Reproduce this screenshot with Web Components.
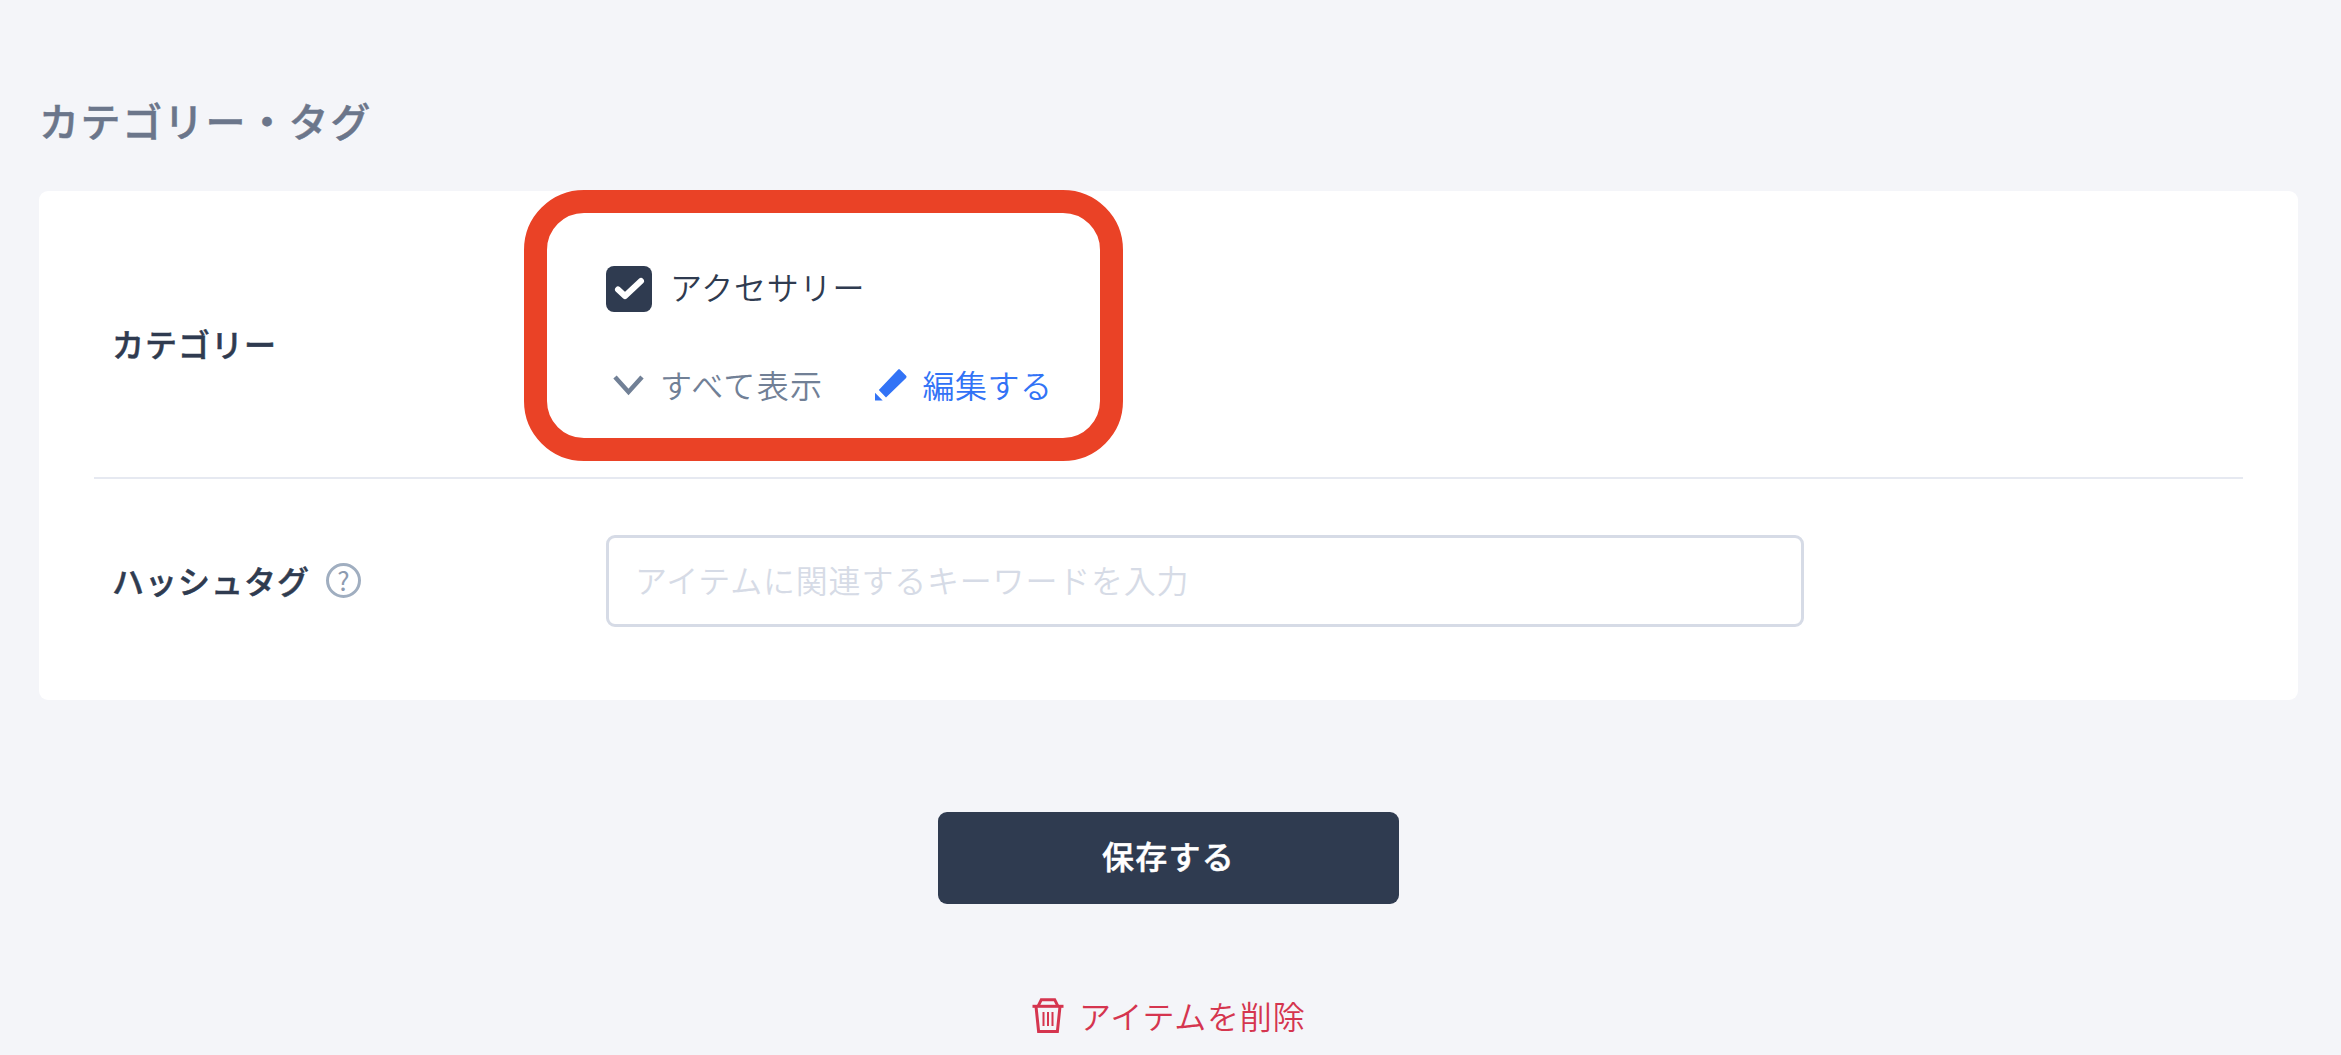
<!DOCTYPE html>
<html lang="ja">
<head>
<meta charset="utf-8">
<title>カテゴリー・タグ</title>
<style>
  html, body { margin: 0; background: #f4f5f9; }
  body { font-family: "Noto Sans CJK JP", "Noto Sans", sans-serif; overflow: hidden; }
</style>
</head>
<body>
<edit-page>
  <tag-card heading="カテゴリー・タグ">
    <form-row label="カテゴリー">
      <category-picker></category-picker>
    </form-row>
    <form-row label="ハッシュタグ" help last>
      <tag-input placeholder="アイテムに関連するキーワードを入力"></tag-input>
    </form-row>
  </tag-card>
  <page-actions></page-actions>
</edit-page>

<script>
class EditPage extends HTMLElement {
    constructor() {
        super();
        this.attachShadow({ mode: 'open' });
        this.shadowRoot.innerHTML = `
            <style>
                :host {
                    display: flex;
                    flex-direction: column;
                    padding: 92px 43px 0 39px;
                    height: 1055px;
                    box-sizing: border-box;
                }
            </style>
            <slot></slot>
        `;
    }
}

class TagCard extends HTMLElement {
    constructor() {
        super();
        this.attachShadow({ mode: 'open' });
        this.shadowRoot.innerHTML = `
            <style>
                :host { display: block; }
                h2 {
                    margin: 0 0 42px;
                    font-size: 40px;
                    line-height: 57px;
                    font-weight: 500;
                    -webkit-text-stroke: .5px #6b768b;
                    color: #6b768b;
                    letter-spacing: 1.6px;
                }
                .card {
                    background: #fff;
                    border-radius: 9px;
                    padding: 19px 55px 18.5px;
                }
            </style>
            <h2></h2>
            <div class="card"><slot></slot></div>
        `;
        this.shadowRoot.querySelector('h2').textContent = this.getAttribute('heading');
    }
}

class FormRow extends HTMLElement {
    constructor() {
        super();
        this.attachShadow({ mode: 'open' });
        this.shadowRoot.innerHTML = `
            <style>
                :host {
                    display: flex;
                    align-items: center;
                    padding: 56px 0 54.5px;
                    border-bottom: 2px solid #e6e9f1;
                }
                :host([last]) { border-bottom: none; }
                .label {
                    flex: 0 0 494px;
                    padding-left: 18px;
                    display: flex;
                    align-items: center;
                    gap: 16px;
                    font-size: 32px;
                    line-height: 48px;
                    font-weight: 500;
                    letter-spacing: 1px;
                    color: #2f3b50;
                }
                .text { padding-bottom: 2px; -webkit-text-stroke: .5px #2f3b50; }
                .help {
                    width: 35px;
                    height: 35px;
                    box-sizing: border-box;
                    border: 3.5px solid #a0aec0;
                    border-radius: 50%;
                    color: #8d9bb0;
                    font-size: 26px;
                    line-height: 27px;
                    font-weight: 400;
                    letter-spacing: 0;
                    text-align: center;
                }
                .body { flex: 1; min-width: 0; }
            </style>
            <div class="label"><span class="text"></span></div>
            <div class="body"><slot></slot></div>
        `;
        this.shadowRoot.querySelector('.text').textContent = this.getAttribute('label');
        if (this.hasAttribute('help')) {
            const help = document.createElement('span');
            help.className = 'help';
            help.textContent = '?';
            this.shadowRoot.querySelector('.label').appendChild(help);
        }
    }
}

class CategoryPicker extends HTMLElement {
    constructor() {
        super();
        this.attachShadow({ mode: 'open' });
        this.shadowRoot.innerHTML = `
            <style>
                :host {
                    display: block;
                    width: fit-content;
                    position: relative;
                    font-size: 32px;
                    font-weight: 350;
                }
                .check {
                    display: flex;
                    align-items: center;
                    gap: 18px;
                    height: 46px;
                    margin-bottom: 36px;
                    color: #2f3b50;
                    letter-spacing: .8px;
                }
                .check span { padding-bottom: 6px; }
                .box {
                    width: 46px;
                    height: 46px;
                    border-radius: 8px;
                    background: #2f3b50;
                    display: block;
                }
                .links {
                    display: flex;
                    align-items: center;
                    height: 74px;
                }
                .link { display: flex; align-items: center; }
                .link span { padding-bottom: 3px; }
                .all { color: #718096; gap: 15px; padding-left: 6px; margin-right: 51.5px; letter-spacing: 1.4px; }
                .edit { color: #3273f6; gap: 14.5px; letter-spacing: .5px; }
                svg { display: block; }
                /* red annotation drawn over the screenshot */
                .ring {
                    position: absolute;
                    top: -76px;
                    bottom: -39px;
                    left: -82px;
                    right: -70px;
                    border: 23px solid #ea4226;
                    border-radius: 60px;
                    pointer-events: none;
                }
            </style>
            <div class="check">
                <svg class="box" viewBox="0 0 46 46">
                    <polyline points="12,23.500 19,30 35,15" fill="none" stroke="#fff" stroke-width="6" stroke-linecap="round" stroke-linejoin="round"/>
                </svg>
                <span>アクセサリー</span>
            </div>
            <div class="links">
                <span class="link all">
                    <svg width="33" height="24" viewBox="0 0 33 24">
                        <polyline points="3,4 16.500,19 30,4" fill="none" stroke="#718096" stroke-width="4.500"/>
                    </svg>
                    <span>すべて表示</span>
                </span>
                <span class="link edit">
                    <svg width="33" height="32" viewBox="0 0 33 32">
                        <path fill="#3273f6" d="M23 .8c.6-.6 1.500-.6 2.100 0l6 6c.6.600.6 1.500 0 2.100L11 28.600 3.800 21Z"/>
                        <path fill="#3273f6" d="M0 23.700 7.700 31.500H0Z"/>
                    </svg>
                    <span>編集する</span>
                </span>
            </div>
            <div class="ring"></div>
        `;
    }
}

class TagInput extends HTMLElement {
    constructor() {
        super();
        this.attachShadow({ mode: 'open' });
        this.shadowRoot.innerHTML = `
            <style>
                :host {
                    display: flex;
                    align-items: center;
                    width: 1198px;
                    height: 92px;
                    box-sizing: border-box;
                    padding: 0 27px;
                    background: #fff;
                    border: 3px solid #d6dbe6;
                    border-radius: 9px;
                    font-size: 32px;
                    font-weight: 350;
                    letter-spacing: .8px;
                    color: #d6dbe6;
                }
                .placeholder { padding-bottom: 3px; margin-left: -1px; }
            </style>
            <span class="placeholder"></span>
        `;
        this.shadowRoot.querySelector('.placeholder').textContent = this.getAttribute('placeholder');
    }
}

class PageActions extends HTMLElement {
    constructor() {
        super();
        this.attachShadow({ mode: 'open' });
        this.shadowRoot.innerHTML = `
            <style>
                :host {
                    display: flex;
                    flex-direction: column;
                    align-items: center;
                    padding-top: 112px;
                }
                button {
                    width: 461px;
                    height: 92px;
                    border: none;
                    border-radius: 9px;
                    background: #2f3b50;
                    color: #fff;
                    font: 500 32px "Noto Sans CJK JP", "Noto Sans", sans-serif;
                    -webkit-text-stroke: .5px #fff;
                    letter-spacing: 1.2px;
                    padding: 0 0 6px;
                }
                .delete {
                    display: flex;
                    align-items: center;
                    gap: 15.5px;
                    margin-top: 87px;
                    font-size: 32px;
                    font-weight: 350;
                    line-height: 48px;
                    letter-spacing: .8px;
                    color: #d5354f;
                }
                .delete span { padding-bottom: 5px; }
                svg { display: block; margin-top: -2px; }
            </style>
            <button type="button">保存する</button>
            <div class="delete">
                <svg width="32" height="36" viewBox="0 0 32 36" fill="none" stroke="#d5354f" stroke-width="3">
                    <path d="M.5 8.300H31.500"/>
                    <path d="M6 8.300 9.300 1.700H22.700L26 8.300"/>
                    <path d="M4 8.300 6.600 33.500H25.400L28 8.300"/>
                    <path d="M11.500 14V28M16 14V28M20.500 14V28" stroke-width="2"/>
                </svg>
                <span>アイテムを削除</span>
            </div>
        `;
    }
}

customElements.define('edit-page', EditPage);
customElements.define('tag-card', TagCard);
customElements.define('form-row', FormRow);
customElements.define('category-picker', CategoryPicker);
customElements.define('tag-input', TagInput);
customElements.define('page-actions', PageActions);
</script>
</body>
</html>
